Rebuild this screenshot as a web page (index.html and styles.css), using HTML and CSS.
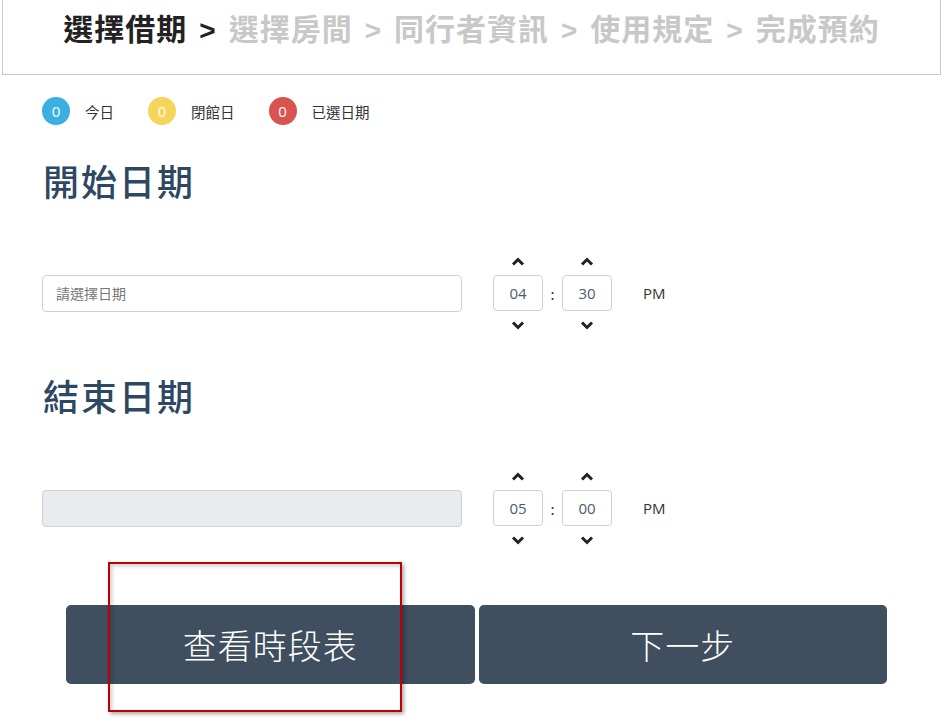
FILE: index.html
```html
<!DOCTYPE html>
<html lang="zh-Hant">
<head>
    <meta charset="UTF-8">
    <meta name="viewport" content="width=device-width, initial-scale=1.0">
    <title>選擇借期</title>
    <link rel="stylesheet" href="styles.css">
</head>
<body>

    <!-- Step header -->
    <div class="steps">
        <span class="step active">選擇借期</span><span class="sep active">&gt;</span><span class="step">選擇房間</span><span class="sep">&gt;</span><span class="step">同行者資訊</span><span class="sep">&gt;</span><span class="step">使用規定</span><span class="sep">&gt;</span><span class="step">完成預約</span>
    </div>

    <main class="page">

        <div class="legend">
            <div class="legend-item"><span class="dot dot-today">0</span>今日</div>
            <div class="legend-item"><span class="dot dot-closed">0</span>閉館日</div>
            <div class="legend-item"><span class="dot dot-picked">0</span>已選日期</div>
        </div>

        <h2 class="section-title first">開始日期</h2>
        <div class="date-row">
            <input type="text" class="date-input" placeholder="請選擇日期">
            <div class="timepicker">
                <div class="time-col">
                    <button class="chev"><svg width="14" height="9" viewBox="0 0 14 9"><polyline points="2,7.5 7,2.5 12,7.5" /></svg></button>
                    <input type="text" class="time-box" value="04">
                    <button class="chev"><svg width="14" height="9" viewBox="0 0 14 9"><polyline points="2,1.5 7,6.5 12,1.5" /></svg></button>
                </div>
                <span class="colon">:</span>
                <div class="time-col">
                    <button class="chev"><svg width="14" height="9" viewBox="0 0 14 9"><polyline points="2,7.5 7,2.5 12,7.5" /></svg></button>
                    <input type="text" class="time-box" value="30">
                    <button class="chev"><svg width="14" height="9" viewBox="0 0 14 9"><polyline points="2,1.5 7,6.5 12,1.5" /></svg></button>
                </div>
                <span class="meridian">PM</span>
            </div>
        </div>

        <h2 class="section-title">結束日期</h2>
        <div class="date-row">
            <input type="text" class="date-input" disabled>
            <div class="timepicker">
                <div class="time-col">
                    <button class="chev"><svg width="14" height="9" viewBox="0 0 14 9"><polyline points="2,7.5 7,2.5 12,7.5" /></svg></button>
                    <input type="text" class="time-box" value="05">
                    <button class="chev"><svg width="14" height="9" viewBox="0 0 14 9"><polyline points="2,1.5 7,6.5 12,1.5" /></svg></button>
                </div>
                <span class="colon">:</span>
                <div class="time-col">
                    <button class="chev"><svg width="14" height="9" viewBox="0 0 14 9"><polyline points="2,7.5 7,2.5 12,7.5" /></svg></button>
                    <input type="text" class="time-box" value="00">
                    <button class="chev"><svg width="14" height="9" viewBox="0 0 14 9"><polyline points="2,1.5 7,6.5 12,1.5" /></svg></button>
                </div>
                <span class="meridian">PM</span>
            </div>
        </div>

        <div class="actions">
            <button class="btn-main">查看時段表</button>
            <button class="btn-main">下一步</button>
            <!-- annotation frame from the screenshot -->
            <div class="mark"></div>
        </div>

    </main>

</body>
</html>
```

FILE: styles.css
```css
body { margin: 0; font-family: "Noto Sans CJK TC", "Noto Sans", sans-serif; color: #333; background: #fff; }

.steps { margin: 0 3px 0 2px; height: 74px; border: 1px solid #c8c8c8; border-top: none; text-align: center; font-size: 30px; font-weight: bold; line-height: 54px; color: #c8c8c8; letter-spacing: 1px; white-space: nowrap; }
.steps .active { color: #222; }
.steps .sep { display: inline-block; margin: 0 13px 0 12px; font-family: "Liberation Sans", sans-serif; font-size: 28px; letter-spacing: 0; }

.page { padding: 0 42px 40px; position: relative; }

.legend { display: flex; gap: 34px; margin-top: 22px; height: 28px; }
.legend-item { display: flex; align-items: center; font-size: 14.5px; color: #333; }
.dot { width: 28px; height: 28px; border-radius: 50%; color: #fff; font-size: 15px; display: flex; align-items: center; justify-content: center; margin-right: 15px; font-family: "Open Sans", sans-serif; }
.dot-today { background: #3baee2; }
.dot-closed { background: #f6d55a; }
.dot-picked { background: #d9534f; }

.section-title { margin: 35px 0 0 1px; font-size: 36px; line-height: 40px; font-weight: 500; color: #2e4863; letter-spacing: 2px; }
.section-title + .date-row { margin-top: 47px; }
.date-row + .section-title { margin-top: 36px; }

.date-row { display: flex; align-items: center; }
.date-input { width: 420px; height: 37px; box-sizing: border-box; border: 1px solid #cdd1d6; border-radius: 4px; padding: 0 13px; font-family: inherit; font-size: 14px; color: #555; background: #fff; }
.date-input::placeholder { color: #777; }
.date-input:disabled { background: #e9ecef; }

.timepicker { display: flex; align-items: center; margin-left: 31px; }
.time-col { display: flex; flex-direction: column; align-items: center; }
.chev { width: 50px; height: 28px; border: none; background: none; padding: 0; display: flex; align-items: center; justify-content: center; }
.chev polyline { fill: none; stroke: #222; stroke-width: 3; }
.time-box { width: 50px; height: 36px; box-sizing: border-box; border: 1px solid #cdd1d6; border-radius: 4px; text-align: center; font-family: "Open Sans", sans-serif; font-size: 15px; color: #4b5b6e; padding: 0; }
.colon { width: 19px; text-align: center; font-size: 15px; color: #333; }
.meridian { margin-left: 31px; font-family: "Open Sans", sans-serif; font-size: 15px; color: #333; }

.actions { display: flex; gap: 4px; margin: 51px 0 0 24px; width: 821px; position: relative; }
.btn-main { flex: 1; height: 79px; border: none; border-radius: 5px; background: #3f4f60; color: #fff; font-family: inherit; font-size: 34px; font-weight: 300; letter-spacing: 1px; }

.mark { position: absolute; left: 42px; top: -43px; width: 290px; height: 146px; border: 2px solid #c00000; box-shadow: 2px 2px 4px rgba(0,0,0,0.35), inset 2px 2px 4px rgba(0,0,0,0.2); }
```
